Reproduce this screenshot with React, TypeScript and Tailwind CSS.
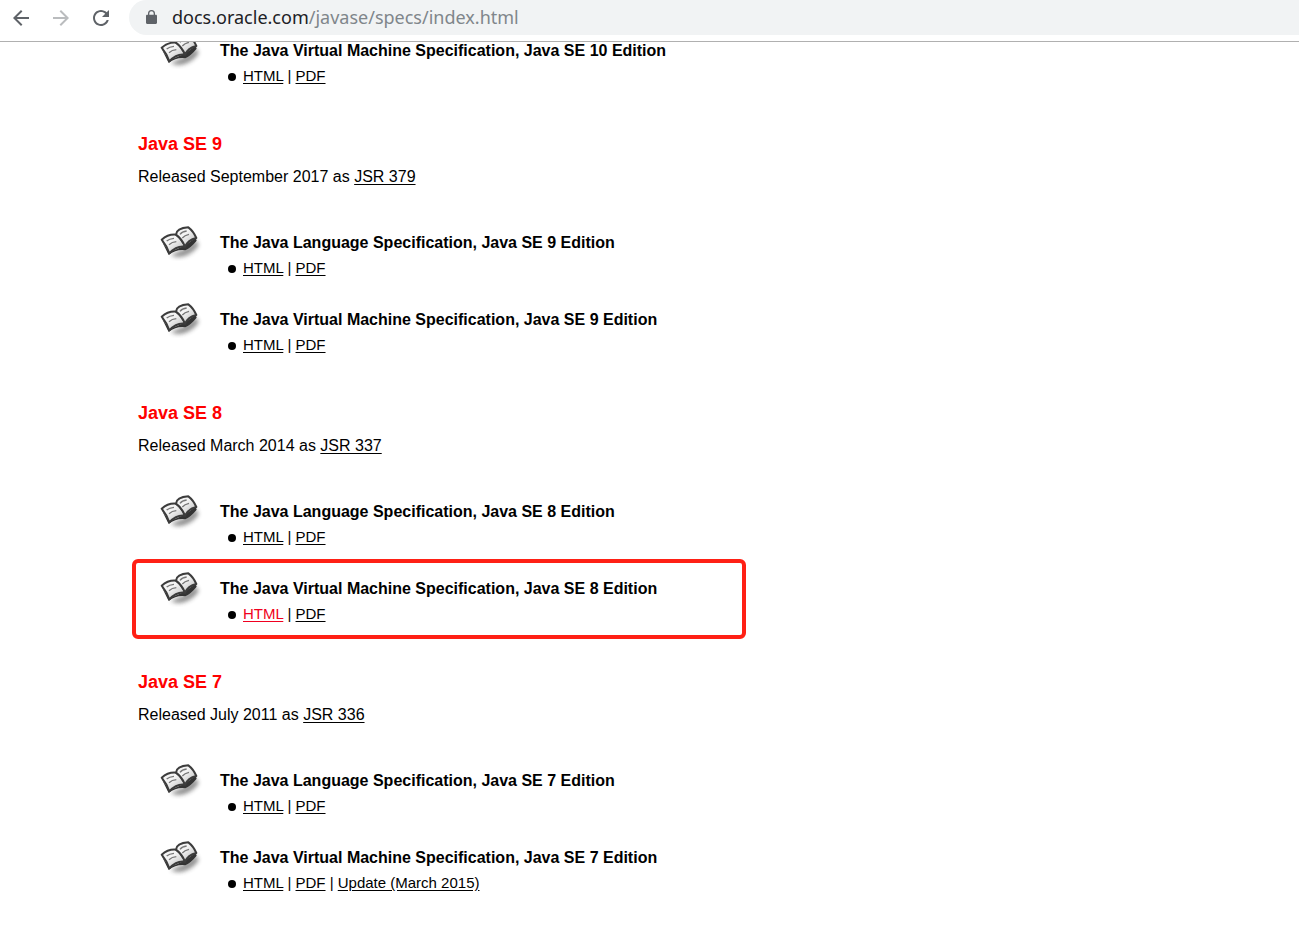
import React from "react";

type Doc = { label: string; href: string; active?: boolean };
type Spec = { title: string; docs: Doc[]; highlighted?: boolean };
type Release = { name: string; date: string; jsr: string; specs: Spec[] };

const htmlAndPdf = (path: string): Doc[] => [
  { label: "HTML", href: `#${path}-html` },
  { label: "PDF", href: `#${path}-pdf` },
];

const releases: Release[] = [
  {
    name: "Java SE 9",
    date: "September 2017",
    jsr: "JSR 379",
    specs: [
      { title: "The Java Language Specification, Java SE 9 Edition", docs: htmlAndPdf("jls9") },
      { title: "The Java Virtual Machine Specification, Java SE 9 Edition", docs: htmlAndPdf("jvms9") },
    ],
  },
  {
    name: "Java SE 8",
    date: "March 2014",
    jsr: "JSR 337",
    specs: [
      { title: "The Java Language Specification, Java SE 8 Edition", docs: htmlAndPdf("jls8") },
      {
        title: "The Java Virtual Machine Specification, Java SE 8 Edition",
        highlighted: true,
        docs: [
          { label: "HTML", href: "#jvms8-html", active: true },
          { label: "PDF", href: "#jvms8-pdf" },
        ],
      },
    ],
  },
  {
    name: "Java SE 7",
    date: "July 2011",
    jsr: "JSR 336",
    specs: [
      { title: "The Java Language Specification, Java SE 7 Edition", docs: htmlAndPdf("jls7") },
      {
        title: "The Java Virtual Machine Specification, Java SE 7 Edition",
        docs: [...htmlAndPdf("jvms7"), { label: "Update (March 2015)", href: "#jvms7-update" }],
      },
    ],
  },
];

function BookIcon() {
  return (
    <svg className="-mt-1.5 h-9 w-11 shrink-0" viewBox="30 30 132 108" aria-hidden="true">
      <defs>
        <filter id="shadow" x="-30%" y="-30%" width="160%" height="160%">
          <feGaussianBlur stdDeviation="6" />
        </filter>
        <linearGradient id="page" x1="0" y1="0" x2="1" y2="1">
          <stop offset="0.4" stopColor="#f4f4f4" />
          <stop offset="1" stopColor="#b4b4b4" />
        </linearGradient>
      </defs>
      <path d="M62 120 L108 100 L138 76 L146 90 Q134 112 104 123 Q80 130 62 120 Z" fill="#555" opacity="0.65" filter="url(#shadow)" />
      <path d="M34 76 L56 120 Q80 102 106 106 Q124 97 140 77 L137 68 L104 92 L58 112 Z" fill="#333" />
      <path d="M35 74 Q54 57 78 59 Q96 72 105 95 Q80 91 58 115 Q50 92 35 74 Z" fill="url(#page)" stroke="#3c3c3c" strokeWidth="6" strokeLinejoin="round" />
      <path d="M78 59 Q80 39 115 37 Q130 48 139 69 Q114 75 105 95 Q96 72 78 59 Z" fill="url(#page)" stroke="#3c3c3c" strokeWidth="6" strokeLinejoin="round" />
      <path d="M50 78 Q58 71 72 70 M57 89 Q66 81 79 80 M90 58 Q96 50 110 48 M97 69 Q104 61 117 58" fill="none" stroke="#777" strokeWidth="4" />
    </svg>
  );
}

function SpecEntry({ spec }: { spec: Spec }) {
  return (
    <li className="relative flex pl-[22px]">
      <BookIcon />
      <div className="ml-4">
        <h3 className="font-bold">{spec.title}</h3>
        <div className="mt-px flex items-center gap-[7px] pl-2 text-[15px] leading-6">
          <span className="mt-0.5 size-2 rounded-full bg-black" />
          <p>
            {spec.docs.map((doc, i) => (
              <React.Fragment key={doc.label}>
                {i > 0 && " | "}
                <a href={doc.href} className={doc.active ? "text-[#f00020] underline underline-offset-2" : "underline underline-offset-2"}>
                  {doc.label}
                </a>
              </React.Fragment>
            ))}
          </p>
        </div>
      </div>
      {spec.highlighted && (
        <div className="pointer-events-none absolute -top-[18px] -left-1.5 h-20 w-[614px] rounded-md border-4 border-[#ff2015]" />
      )}
    </li>
  );
}

function BrowserBar() {
  return (
    <header className="flex h-[42px] items-start border-b border-[#b0b0b0] bg-white">
      <nav className="flex h-[35px] items-center gap-4 pl-[9px] text-[#5f6368]" aria-label="Browser">
        <button type="button" aria-label="Back" className="size-6">
          <svg viewBox="0 0 24 24" className="size-6" fill="currentColor">
            <path d="M20 11H7.83l5.59-5.59L12 4l-8 8 8 8 1.41-1.41L7.83 13H20v-2z" />
          </svg>
        </button>
        <button type="button" aria-label="Forward" className="size-6 text-[#babcbe]">
          <svg viewBox="0 0 24 24" className="size-6" fill="currentColor">
            <path d="m12 4-1.41 1.41L16.17 11H4v2h12.17l-5.58 5.59L12 20l8-8z" />
          </svg>
        </button>
        <button type="button" aria-label="Reload" className="size-6">
          <svg viewBox="0 0 24 24" className="size-6" fill="currentColor">
            <path d="M17.65 6.35C16.2 4.9 14.21 4 12 4c-4.42 0-7.99 3.58-7.99 8s3.57 8 7.99 8c3.73 0 6.84-2.55 7.73-6h-2.08c-.82 2.33-3.04 4-5.65 4-3.31 0-6-2.69-6-6s2.69-6 6-6c1.66 0 3.14.69 4.22 1.78L13 11h7V4l-2.35 2.35z" />
          </svg>
        </button>
      </nav>
      <div className="ml-4 flex h-[35px] flex-1 items-center rounded-l-full bg-[#f1f3f4] pb-0.5 pl-[17px]">
        <svg viewBox="0 0 11 14" className="h-3.5 w-[11px] shrink-0" fill="#5f6368" aria-hidden="true">
          <path d="M9.8 4.8H9V3.5a3.5 3.5 0 0 0-7 0v1.3h-.8C.5 4.8 0 5.3 0 6v6.8C0 13.5.5 14 1.2 14h8.6c.7 0 1.2-.5 1.2-1.2V6c0-.7-.5-1.2-1.2-1.2ZM3.3 4.8V3.5a2.2 2.2 0 0 1 4.4 0v1.3Z" />
        </svg>
        <a href="#address" className="ml-[15px] font-['Noto_Sans',sans-serif] text-lg text-[#202124]">
          docs.oracle.com<span className="text-[#80868b]">/javase/specs/index.html</span>
        </a>
      </div>
    </header>
  );
}

export default function App() {
  return (
    <div className="min-h-screen bg-white font-['Liberation_Sans',Arial,sans-serif] text-base leading-6 text-black">
      <BrowserBar />
      <main className="overflow-hidden px-[138px] pb-8">
        <ul className="-mt-[3px]">
          <SpecEntry
            spec={{ title: "The Java Virtual Machine Specification, Java SE 10 Edition", docs: htmlAndPdf("jvms10") }}
          />
        </ul>
        <div className="mt-11 flex flex-col gap-11">
          {releases.map((release) => (
            <section key={release.name}>
              <h2 className="text-lg leading-6 font-bold text-[#f00]">{release.name}</h2>
              <p className="mt-[9px]">
                Released {release.date} as{" "}
                <a href={`#${release.name}`} className="underline underline-offset-2">
                  {release.jsr}
                </a>
              </p>
              <ul className="mt-[42px] flex flex-col gap-7">
                {release.specs.map((spec) => (
                  <SpecEntry key={spec.title} spec={spec} />
                ))}
              </ul>
            </section>
          ))}
        </div>
      </main>
    </div>
  );
}
